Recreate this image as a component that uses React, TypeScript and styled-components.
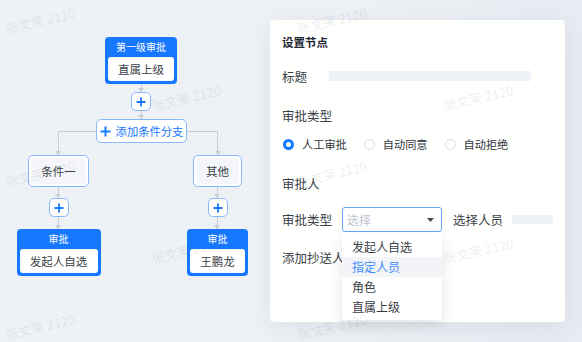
import styled, { createGlobalStyle } from 'styled-components';

const GlobalStyle = createGlobalStyle`
  body {
    margin: 0;
    font-family: "Noto Sans CJK SC", "Noto Sans", sans-serif;
  }
  * { box-sizing: border-box; }
`;

const Page = styled.div`
  position: relative;
  width: 582px;
  height: 342px;
  overflow: hidden;
  display: flex;
  background: linear-gradient(90deg, #eff2f5 0%, #edf0f4 60%, #e7ebf2 100%);
`;

// ---- flow canvas ----
const FlowCanvas = styled.div`
  width: 270px;
  padding-top: 37px;
  display: flex;
  flex-direction: column;
  align-items: flex-start;
`;

const Stack = styled.div<{ $left?: number; $width: number }>`
  margin-left: ${({ $left }) => $left ?? 0}px;
  width: ${({ $width }) => $width}px;
  display: flex;
  flex-direction: column;
  align-items: center;
`;

const ApprovalNode = styled.div<{ $width: number }>`
  width: ${({ $width }) => $width}px;
  background: #1677ff;
  border-radius: 4px;
  padding: 0 3px 3px;
  display: flex;
  flex-direction: column;
`;

const NodeTitle = styled.div`
  height: 20px;
  line-height: 20px;
  text-align: center;
  color: #fff;
  font-size: 10px;
`;

const NodeBody = styled.div`
  height: 24px;
  line-height: 24px;
  background: #fff;
  border-radius: 3px;
  text-align: center;
  color: #3a3f47;
  font-size: 11.5px;
`;

const Line = styled.div<{ $h: number }>`
  position: relative;
  width: 1px;
  height: ${({ $h }) => $h}px;
  background: #c9ced6;
  &::after {
    content: '';
    position: absolute;
    left: -3px;
    bottom: 0;
    border-left: 3.5px solid transparent;
    border-right: 3.5px solid transparent;
    border-top: 4px solid #c9ced6;
  }
`;

const PlusButton = styled.div`
  width: 20px;
  height: 19px;
  border: 1px solid #8ab8ff;
  border-radius: 5px;
  background: #fff;
  display: flex;
  align-items: center;
  justify-content: center;
`;

const BranchHead = styled.div`
  margin-left: 58px;
  display: flex;
  align-items: flex-start;
`;

const Arm = styled.div<{ $side: 'left' | 'right'; $width: number }>`
  position: relative;
  width: ${({ $width }) => $width}px;
  height: 24px;
  margin-top: 12px;
  border-top: 1px solid #c9ced6;
  ${({ $side }) => `border-${$side}: 1px solid #c9ced6;`}
  &::after {
    content: '';
    position: absolute;
    bottom: 0;
    ${({ $side }) => `${$side}: -4px;`}
    border-left: 3.5px solid transparent;
    border-right: 3.5px solid transparent;
    border-top: 4px solid #c9ced6;
  }
`;

const BranchButton = styled.div`
  width: 91px;
  height: 24px;
  border: 1px solid #8ab8ff;
  border-radius: 5px;
  background: #fff;
  display: flex;
  align-items: center;
  justify-content: center;
  gap: 5px;
  color: #1677ff;
  font-size: 11.3px;
  white-space: nowrap;
`;

const BranchRow = styled.div`
  margin-left: 13px;
  display: flex;
  gap: 68px;
`;

const CondNode = styled.div<{ $width: number }>`
  width: ${({ $width }) => $width}px;
  height: 32px;
  border: 1px solid #8ab8ff;
  border-radius: 5px;
  background: #fff;
  padding: 2px;
  display: flex;
`;

const CondInner = styled.div`
  flex: 1;
  background: #f4f6f9;
  border-radius: 3px;
  display: flex;
  align-items: center;
  justify-content: center;
  color: #3a3f47;
  font-size: 11.5px;
`;

// ---- settings panel ----
const Panel = styled.div`
  margin-top: 20px;
  width: 295px;
  height: 302px;
  background: #fffffe;
  border-radius: 4px;
  box-shadow: 0 6px 24px rgba(40, 60, 100, 0.08);
  padding: 14px 12px 0;
  display: flex;
  flex-direction: column;
`;

const PanelTitle = styled.div`
  height: 16px;
  line-height: 16px;
  font-size: 11.5px;
  font-weight: 700;
  color: #1f2633;
`;

const Row = styled.div<{ $mt: number; $h?: number }>`
  margin-top: ${({ $mt }) => $mt}px;
  height: ${({ $h }) => $h ?? 20}px;
  display: flex;
  align-items: center;
  font-size: 12.5px;
  color: #3a3f47;
  white-space: nowrap;
`;

const Label = styled.span<{ $width?: number; $ml?: number }>`
  display: inline-block;
  width: ${({ $width }) => ($width ? `${$width}px` : 'auto')};
  margin-left: ${({ $ml }) => $ml ?? 0}px;
`;

const Bar = styled.div<{ $width: number; $h: number; $ml?: number }>`
  width: ${({ $width }) => $width}px;
  height: ${({ $h }) => $h}px;
  margin-left: ${({ $ml }) => $ml ?? 0}px;
  background: #eef1f5;
`;

const RadioGroup = styled.div`
  display: flex;
  align-items: center;
  gap: 17px;
  margin-left: 1px;
`;

const RadioItem = styled.label`
  display: flex;
  align-items: center;
  gap: 8px;
  font-size: 11.2px;
  color: #2f343c;
`;

const RadioDot = styled.span<{ $checked?: boolean }>`
  width: 11px;
  height: 11px;
  border-radius: 50%;
  background: #fff;
  border: ${({ $checked }) => ($checked ? '3px solid #1677ff' : '1px solid #d9dce4')};
`;

const SelectWrap = styled.div`
  position: relative;
  margin-left: 10px;
`;

const SelectBox = styled.div`
  width: 100px;
  height: 25px;
  border: 1px solid #69a6ff;
  border-radius: 3px;
  background: #fff;
  padding: 0 7px 0 4px;
  display: flex;
  align-items: center;
  justify-content: space-between;
  font-size: 12px;
  color: #c0c4cc;
`;

const Dropdown = styled.ul`
  position: absolute;
  top: 26px;
  left: 0;
  width: 100px;
  margin: 0;
  padding: 4px 0 3px;
  list-style: none;
  background: #fff;
  border-radius: 0 0 3px 3px;
  box-shadow: 0 4px 12px rgba(30, 40, 60, 0.13);
  z-index: 2;
`;

const Option = styled.li<{ $active?: boolean }>`
  height: 20px;
  line-height: 20px;
  padding-left: 10px;
  font-size: 12px;
  color: ${({ $active }) => ($active ? '#3d8bff' : '#3a3f47')};
  background: ${({ $active }) => ($active ? '#f2f4f7' : 'transparent')};
`;

// ---- watermark overlay ----
const Watermark = styled.div`
  position: absolute;
  inset: 0;
  pointer-events: none;
  display: flex;
  margin-left: -33px;
  z-index: 5;
`;

const MarkColumn = styled.div<{ $odd: boolean }>`
  width: 146px;
  flex-shrink: 0;
  display: flex;
  flex-direction: column;
  align-items: center;
  gap: 133px;
  padding-top: ${({ $odd }) => ($odd ? 88 : 11)}px;
`;

const Mark = styled.div`
  height: 20px;
  line-height: 20px;
  font-size: 13px;
  white-space: nowrap;
  color: rgba(60, 70, 90, 0.1);
  transform: rotate(-13deg);
`;

const PlusIcon = ({ size = 10 }: { size?: number }) => (
  <svg width={size} height={size} viewBox="0 0 10 10">
    <path d="M5 0.5v9M0.5 5h9" stroke="#1677ff" strokeWidth="1.8" fill="none" />
  </svg>
);

const Caret = () => (
  <svg width="7" height="4" viewBox="0 0 7 4">
    <path d="M0 0h7L3.5 4z" fill="#444a55" />
  </svg>
);

const branches = [
  { cond: '条件一', condWidth: 61, nodeWidth: 84, person: '发起人自选' },
  { cond: '其他', condWidth: 49, nodeWidth: 61, person: '王鹏龙' },
];

const options = ['发起人自选', '指定人员', '角色', '直属上级'];

export default function App() {
  return (
    <>
      <GlobalStyle />
      <Page>
        <FlowCanvas>
          <Stack $left={105} $width={72}>
            <ApprovalNode $width={72}>
              <NodeTitle>第一级审批</NodeTitle>
              <NodeBody>直属上级</NodeBody>
            </ApprovalNode>
            <Line $h={8} />
            <PlusButton><PlusIcon /></PlusButton>
            <Line $h={8} />
          </Stack>
          <BranchHead>
            <Arm $side="left" $width={38} />
            <BranchButton><PlusIcon size={11} />添加条件分支</BranchButton>
            <Arm $side="right" $width={31} />
          </BranchHead>
          <BranchRow>
            {branches.map(b => (
              <Stack key={b.cond} $width={91}>
                <CondNode $width={b.condWidth}>
                  <CondInner>{b.cond}</CondInner>
                </CondNode>
                <Line $h={11} />
                <PlusButton><PlusIcon /></PlusButton>
                <Line $h={12} />
                <ApprovalNode $width={b.nodeWidth}>
                  <NodeTitle>审批</NodeTitle>
                  <NodeBody>{b.person}</NodeBody>
                </ApprovalNode>
              </Stack>
            ))}
          </BranchRow>
        </FlowCanvas>

        <Panel>
          <PanelTitle>设置节点</PanelTitle>
          <Row $mt={16}>
            <Label $width={47}>标题</Label>
            <Bar $width={202} $h={10} />
          </Row>
          <Row $mt={19}>审批类型</Row>
          <Row $mt={9}>
            <RadioGroup>
              <RadioItem><RadioDot $checked />人工审批</RadioItem>
              <RadioItem><RadioDot />自动同意</RadioItem>
              <RadioItem><RadioDot />自动拒绝</RadioItem>
            </RadioGroup>
          </Row>
          <Row $mt={19}>审批人</Row>
          <Row $mt={14} $h={25}>
            <Label>审批类型</Label>
            <SelectWrap>
              <SelectBox>选择<Caret /></SelectBox>
              <Dropdown>
                {options.map(o => (
                  <Option key={o} $active={o === '指定人员'}>{o}</Option>
                ))}
              </Dropdown>
            </SelectWrap>
            <Label $ml={11}>选择人员</Label>
            <Bar $width={43} $h={9} $ml={9} />
          </Row>
          <Row $mt={15}>添加抄送人</Row>
        </Panel>

        <Watermark>
          {[0, 1, 2, 3, 4].map(c => (
            <MarkColumn key={c} $odd={c % 2 === 1}>
              {(c % 2 === 1 ? [0, 1] : [0, 1, 2]).map(r => (
                <Mark key={r}>张文茉 2120</Mark>
              ))}
            </MarkColumn>
          ))}
        </Watermark>
      </Page>
    </>
  );
}
